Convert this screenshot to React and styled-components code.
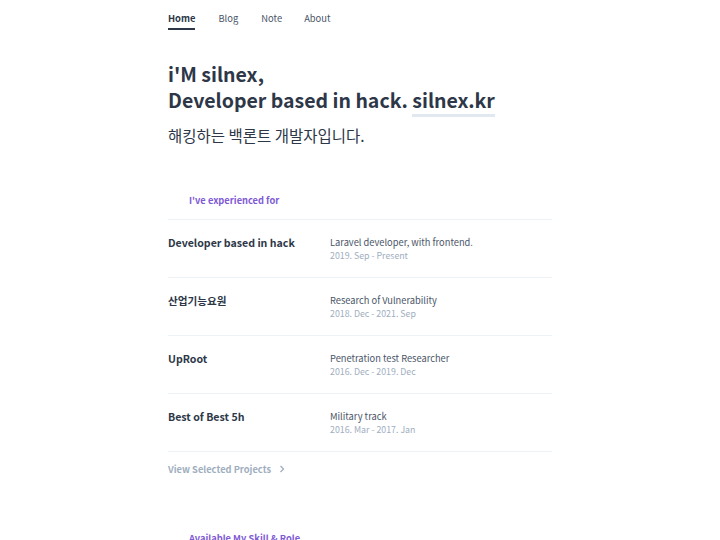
import React from 'react';
import styled, { createGlobalStyle } from 'styled-components';

const Global = createGlobalStyle`
  html, body {
    margin: 0;
    padding: 0;
    background: #fff;
    font-family: "Noto Sans CJK KR", "Noto Sans", sans-serif;
    color: #2d3748;
  }
`

const Page = styled.div`
  width: 384px;
  margin: 0 auto;
  padding-top: 9px;
`

const Nav = styled.nav`
  display: flex;
  height: 22px;
`

const NavLink = styled.a`
  font-size: 9.4px;
  line-height: 18px;
  margin-right: ${p => p.gap}px;
  color: ${p => p.active ? '#2d3748' : '#4a5568'};
  font-weight: ${p => p.active ? 700 : 400};
  border-bottom: 2px solid ${p => p.active ? '#2d3748' : 'transparent'};
  height: 19px;
  text-decoration: none;
`

const Hero = styled.header`
  margin-top: 30px;
`

const Headline = styled.h1`
  margin: 0;
  font-size: 19.5px;
  line-height: 26px;
  font-weight: 700;
  color: #2d3748;
`

const Domain = styled.span`
  border-bottom: 3px solid #e2e8f0;
`

const Sub = styled.p`
  margin: 11px 0 0;
  font-size: 15.5px;
  line-height: 22px;
  font-weight: 400;
  color: #2d3748;
`

const Section = styled.section`
  margin-top: ${p => p.top}px;
`

const SectionTitle = styled.h2`
  margin: 0 0 0 21px;
  font-size: 9.3px;
  line-height: 16px;
  font-weight: 700;
  color: #805ad5;
`

const List = styled.div`
  margin-top: 11px;
  border-top: 1px solid #edf2f7;
`

const Row = styled.div`
  display: flex;
  height: 58px;
  padding-top: 15px;
  box-sizing: border-box;
  border-bottom: 1px solid #edf2f7;
`

const Company = styled.div`
  width: 162px;
  font-size: 10.6px;
  line-height: 16px;
  font-weight: 700;
  color: #2d3748;
`

const Detail = styled.div`
  display: flex;
  flex-direction: column;
`

const Role = styled.div`
  font-size: 9.3px;
  line-height: 14px;
  color: #4a5568;
`

const Period = styled.div`
  font-size: 8.8px;
  line-height: 14px;
  color: #a0aec0;
`

const More = styled.a`
  display: flex;
  align-items: center;
  gap: 7px;
  margin-top: 9px;
  font-size: 9.3px;
  line-height: 16px;
  font-weight: 700;
  color: #a0aec0;
  text-decoration: none;
`

const jobs = [
  { company: 'Developer based in hack', role: 'Laravel developer, with frontend.', period: '2019. Sep - Present' },
  { company: '산업기능요원', role: 'Research of Vulnerability', period: '2018. Dec - 2021. Sep' },
  { company: 'UpRoot', role: 'Penetration test Researcher', period: '2016. Dec - 2019. Dec' },
  { company: 'Best of Best 5h', role: 'Military track', period: '2016. Mar - 2017. Jan' },
]

const App = () => {
  return (
    <Page>
      <Global />
      <Nav>
        <NavLink active gap={23}>Home</NavLink>
        <NavLink gap={23}>Blog</NavLink>
        <NavLink gap={22}>Note</NavLink>
        <NavLink>About</NavLink>
      </Nav>
      <Hero>
        <Headline>
          i'M silnex,<br />
          Developer based in hack. <Domain>silnex.kr</Domain>
        </Headline>
        <Sub>해킹하는 백론트 개발자입니다.</Sub>
      </Hero>

      <Section top={46}>
        <SectionTitle>I've experienced for</SectionTitle>
        <List>
          {jobs.map(j => (
            <Row key={j.company}>
              <Company>{j.company}</Company>
              <Detail>
                <Role>{j.role}</Role>
                <Period>{j.period}</Period>
              </Detail>
            </Row>
          ))}
        </List>
        <More>
          View Selected Projects
          <svg width="8" height="8" viewBox="0 0 8 8" fill="none" stroke="#a0aec0" strokeWidth="1.3">
            <path d="M2.5 1 L5.5 4 L2.5 7" />
          </svg>
        </More>
      </Section>

      <Section top={53}>
        <SectionTitle>Available My Skill &amp; Role</SectionTitle>
      </Section>
    </Page>
  )
}

export default App;
